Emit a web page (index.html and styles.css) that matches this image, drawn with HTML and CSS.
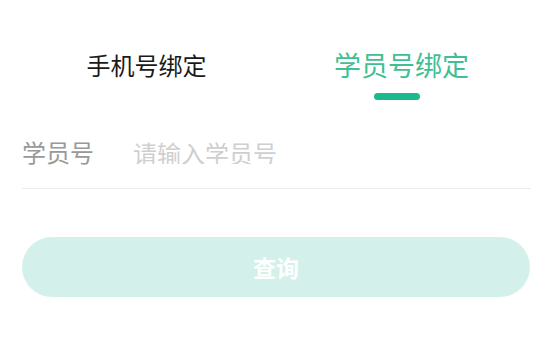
FILE: index.html
```html
<!DOCTYPE html>
<html lang="zh-CN">
<head>
<meta charset="utf-8">
<title>绑定</title>
<link rel="stylesheet" href="styles.css">
</head>
<body>
<div class="page">
  <div class="tabs">
    <div class="tab">
      <span class="tab-label">手机号绑定</span>
    </div>
    <div class="tab tab-active">
      <span class="tab-label">学员号绑定</span>
      <span class="tab-bar"></span>
    </div>
  </div>
  <form class="form">
    <div class="field">
      <span class="field-label">学员号</span>
      <input class="field-input" type="text" placeholder="请输入学员号">
    </div>
    <button class="submit" type="button">查询</button>
  </form>
</div>
</body>
</html>
```
FILE: styles.css
```css
html, body {
  margin: 0;
  padding: 0;
  background: #fff;
}
body {
  font-family: "Noto Sans CJK SC", "Noto Sans", sans-serif;
  color: #222;
}
.page {
  width: 560px;
}
.tabs {
  display: flex;
  margin: 0 31px 0 19px;
  padding-top: 45px;
}
.tab {
  flex: 1;
  display: flex;
  flex-direction: column;
  align-items: center;
}
.tab-label {
  height: 40px;
  line-height: 40px;
  font-size: 24px;
  color: #1a1a1a;
  white-space: nowrap;
}
.tab-active .tab-label {
  font-size: 27px;
  color: #3fbf93;
}
.tab-bar {
  display: block;
  width: 46px;
  height: 7px;
  margin-top: 8px;
  margin-right: 9px;
  border-radius: 4px;
  background: #1db98e;
}
.form {
  margin: 0 29px 0 22px;
}
.field {
  display: flex;
  align-items: center;
  padding: 40px 0 24px;
  border-bottom: 1px solid #ececec;
}
.field-label {
  width: 111px;
  flex: none;
  font-size: 24px;
  line-height: 24px;
  color: #999;
}
.field-input {
  flex: 1;
  min-width: 0;
  border: none;
  outline: none;
  padding: 0;
  margin: 0;
  height: 24px;
  font-family: inherit;
  font-size: 24px;
  line-height: 24px;
  color: #333;
  background: transparent;
}
.field-input::placeholder {
  color: #cfcfcf;
}
.submit {
  display: block;
  width: 508px;
  height: 60px;
  margin-top: 48px;
  border: none;
  border-radius: 30px;
  background: #d3f1ea;
  color: #fff;
  font-family: inherit;
  font-size: 23px;
  font-weight: 700;
  padding: 0;
}
```
